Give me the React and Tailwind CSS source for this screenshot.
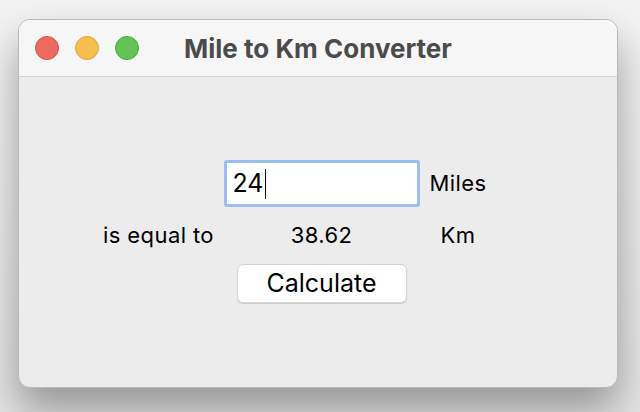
import { useState } from 'react'

export default function App() {
  const [miles] = useState('24')
  const km = (parseFloat(miles || '0') * 1.609).toFixed(2)

  return (
    <div className="h-[412px] w-[640px] bg-gradient-to-b from-[#f3f3f3] to-[#e4e4e4] pl-[18px] pt-[19px] font-['Inter',sans-serif]">
      <div className="flex h-[369px] w-[600px] flex-col overflow-hidden rounded-[12px] border border-[#b9b9b9] bg-[#ececec] shadow-[0_22px_40px_rgba(0,0,0,0.35)]">
        <div className="relative flex h-[57px] shrink-0 items-center border-b border-[#d2d2d2] bg-[#f6f6f6] px-[16px]">
          <div className="flex gap-[16px]">
            <span className="h-[24px] w-[24px] rounded-full border border-[#d9534c] bg-[#ee6a5e]" />
            <span className="h-[24px] w-[24px] rounded-full border border-[#dca63b] bg-[#f5be4f]" />
            <span className="h-[24px] w-[24px] rounded-full border border-[#4aa93e] bg-[#61c454]" />
          </div>
          <div className="flex-1 pr-[104px] text-center text-[26px] font-bold text-[#4b4b4b]">Mile to Km Converter</div>
        </div>
        <div className="grid grid-cols-[127px_199px_74px] items-center pl-[76px] pt-[81px] text-[22px] tracking-[0.4px] text-black">
          <div />
          <div className="flex h-[51px] items-center justify-center">
            <div className="flex h-[47px] w-[196px] items-center rounded-[3px] border-[3px] border-[#9dbdf2] bg-white px-[6px]">
              <span className="text-[25px] leading-none tracking-normal">{miles}</span>
              <span className="ml-[1px] h-[30px] w-[1.5px] bg-black" />
            </div>
          </div>
          <div className="text-center">Miles</div>

          <div className="flex h-[52px] items-center justify-center">is equal to</div>
          <div className="text-center">{km}</div>
          <div className="text-center">Km</div>

          <div />
          <div className="flex justify-center pt-[3px]">
            <button
              type="button"
              className="h-[39px] w-[170px] rounded-[6px] border border-[#d4d4d4] bg-white text-[25px] tracking-normal shadow-[0_1px_1px_rgba(0,0,0,0.15)]"
            >
              Calculate
            </button>
          </div>
          <div />
        </div>
      </div>
    </div>
  )
}
